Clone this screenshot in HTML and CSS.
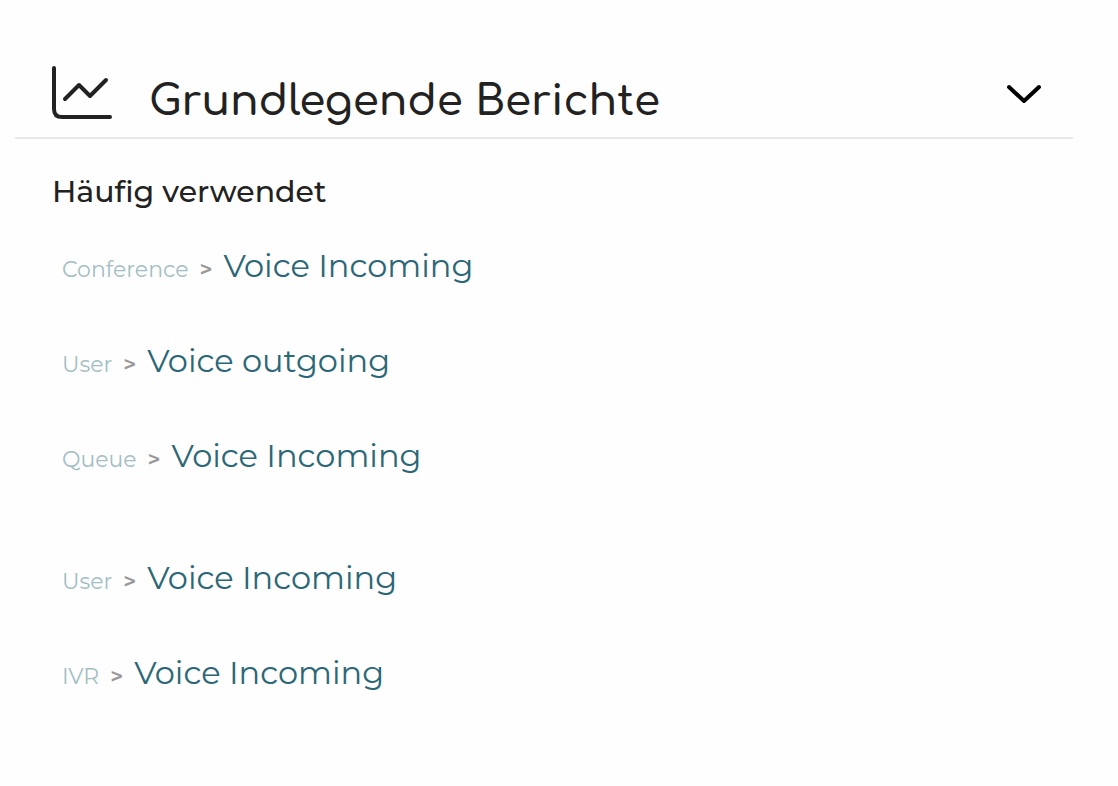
FILE: index.html
```
<!DOCTYPE html>
<html lang="de">

<head>
    <meta charset="UTF-8">
    <meta name="viewport" content="width=device-width, initial-scale=1.0">
    <title>Grundlegende Berichte</title>
    <link rel="stylesheet" href="styles.css">
</head>

<body>

    <section class="reports">
        <header class="reports-header">
            <svg class="chart-icon" viewBox="0 0 62 54" aria-hidden="true">
                <path d="M3 2V43Q3 51 11 51H59" />
                <path d="M14 33L28 19L39 30L55 14" />
            </svg>
            <h1>Grundlegende Berichte</h1>
            <button class="toggle" type="button" aria-label="Berichte ein- oder ausklappen" aria-expanded="true">
                <svg viewBox="0 0 36 20" aria-hidden="true">
                    <path d="M3 3L18 17L33 3" />
                </svg>
            </button>
        </header>

        <div class="reports-body">
            <h2>Häufig verwendet</h2>

            <ul>
                <li><span class="group">Conference</span><span class="sep">&gt;</span><a href="#">Voice Incoming</a></li>
                <li><span class="group">User</span><span class="sep">&gt;</span><a href="#">Voice outgoing</a></li>
                <li><span class="group">Queue</span><span class="sep">&gt;</span><a href="#">Voice Incoming</a></li>
            </ul>

            <ul>
                <li><span class="group">User</span><span class="sep">&gt;</span><a href="#">Voice Incoming</a></li>
                <li><span class="group">IVR</span><span class="sep">&gt;</span><a href="#">Voice Incoming</a></li>
            </ul>
        </div>
    </section>

</body>
</html>
```

FILE: styles.css
```
* {
    padding: 0;
    margin: 0;
    box-sizing: border-box;
    list-style: none;
}

body {
    background-color: #fefefe;
    color: #222;
    font-family: Montserrat, Inter, sans-serif;
    font-variant-ligatures: none;
}

.reports {
    padding: 66px 45px 40px 15px;
}

.reports-header {
    display: flex;
    align-items: flex-end;
    padding: 0 31px 11px 36px;
    border-bottom: 2px solid #e8e8e8;
}

svg {
    display: block;
    fill: none;
    stroke: currentColor;
    stroke-linecap: round;
    stroke-linejoin: round;
}

.chart-icon {
    width: 62px;
    height: 54px;
    flex: none;
    margin-bottom: 6px;
    stroke-width: 4;
}

h1 {
    flex: 1;
    margin-left: 36px;
    font-family: Comfortaa, Inter, sans-serif;
    font-size: 42px;
    font-weight: 600;
    line-height: 48px;
}

.toggle {
    margin-bottom: 22px;
    border: none;
    background: none;
    color: #000;
    cursor: pointer;
}

.toggle svg {
    width: 36px;
    height: 20px;
    stroke-width: 4;
}

.reports-body {
    padding: 33px 37px 0;
}

h2 {
    font-size: 30px;
    font-weight: 500;
    line-height: 40px;
}

ul {
    margin-bottom: 27px;
    padding-left: 10px;
}

li {
    display: flex;
    align-items: baseline;
    height: 95px;
    padding-top: 34px;
}

.group {
    color: #a3bec4;
    font-size: 22px;
}

.sep {
    margin: 0 11px;
    color: #999;
    font-size: 22px;
    font-weight: 600;
}

a {
    color: #2b6777;
    font-size: 32px;
    line-height: 40px;
    text-decoration: none;
}
```
